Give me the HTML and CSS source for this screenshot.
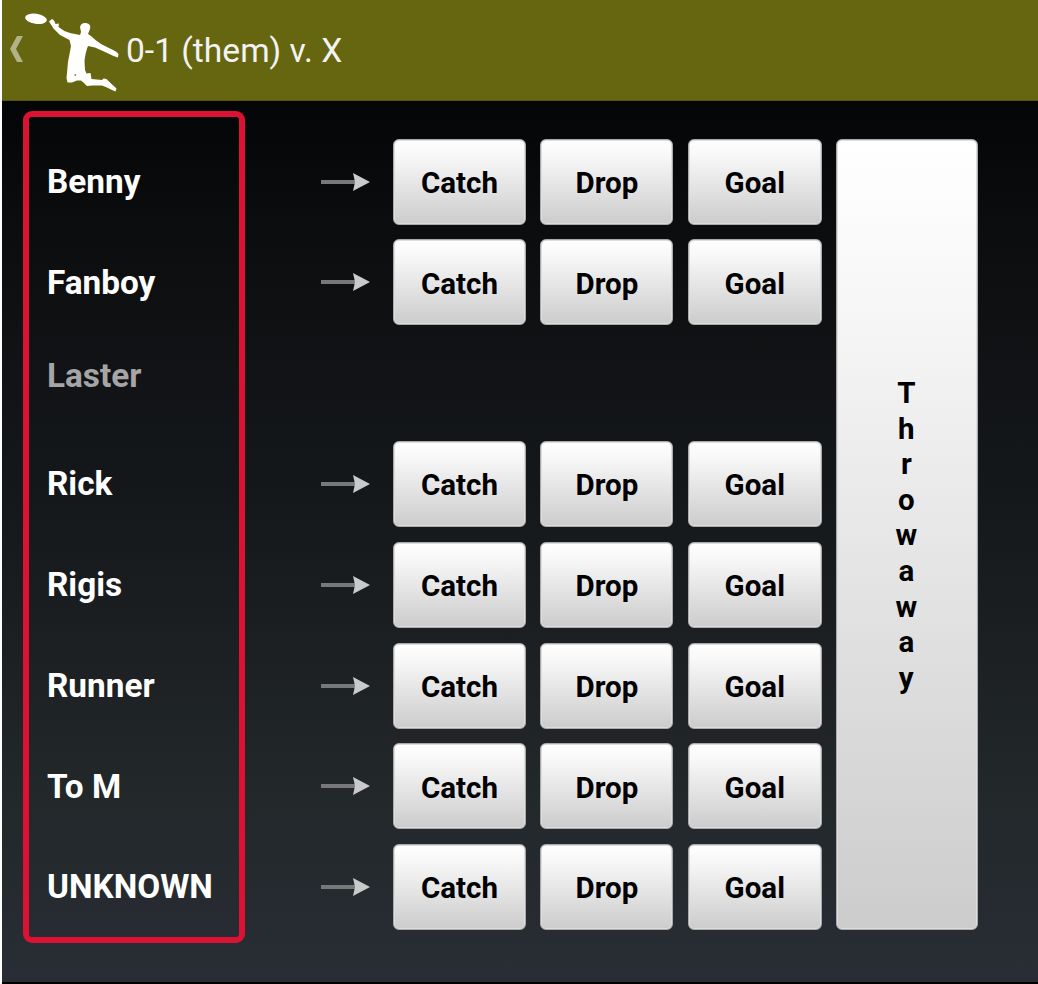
FILE: index.html
```html
<!DOCTYPE html>
<html lang="en">
<head>
<meta charset="utf-8">
<title>0-1 (them) v. X</title>
<link rel="stylesheet" href="styles.css">
</head>
<body>
<div class="app">
<header class="bar">
<svg class="logo" viewBox="0 0 120 101" aria-hidden="true">
<path class="back" d="M17 36h6l-7 13 7 13h-6L10 49z"/>
<ellipse cx="36" cy="18.8" rx="11" ry="5" transform="rotate(8 36 18.8)"/>
<path d="M49 21.500L52 19Q54.500 20 55.500 24L59 23.500 58.500 27Q63 31 70 33L80 35 81 32 80 27Q81 22.500 86 23Q91.500 24 90 29L88 34 91 36Q95 40 101 44L116 51.500 118.500 54 118 57.500 113.500 56 104 51.500 95 47.500 88 46Q85.500 52 84.500 61L85 70 86.500 73.500 90.500 73 91.500 79 102 80 103.500 78.500 106.500 79 110.500 83 116.500 88.500 115.500 91.500 112 90 107 87.500 102 85.500 92 85.500 87 86 84 83 81 80.500 77 80.500 72 82.500 67.500 82.500 66.500 78 68 62 71 46 69.500 40 60 35 53.500 28.500z"/>
<circle class="hole" cx="75.300" cy="75" r="1"/>
</svg>
<h1 class="title">0-1 (them) v. X</h1>
</header>
<main class="panel">
<section class="players">
<div class="row"><span class="name">Benny</span><svg class="arrow" viewBox="0 0 50 20"><path class="shaft" d="M0 8h35v4H0z"/><path class="head" d="M32 1L49 10 32 19 34 10z"/></svg><button>Catch</button><button>Drop</button><button>Goal</button></div>
<div class="row"><span class="name">Fanboy</span><svg class="arrow" viewBox="0 0 50 20"><path class="shaft" d="M0 8h35v4H0z"/><path class="head" d="M32 1L49 10 32 19 34 10z"/></svg><button>Catch</button><button>Drop</button><button>Goal</button></div>
<div class="row inactive"><span class="name">Laster</span></div>
<div class="row"><span class="name">Rick</span><svg class="arrow" viewBox="0 0 50 20"><path class="shaft" d="M0 8h35v4H0z"/><path class="head" d="M32 1L49 10 32 19 34 10z"/></svg><button>Catch</button><button>Drop</button><button>Goal</button></div>
<div class="row"><span class="name">Rigis</span><svg class="arrow" viewBox="0 0 50 20"><path class="shaft" d="M0 8h35v4H0z"/><path class="head" d="M32 1L49 10 32 19 34 10z"/></svg><button>Catch</button><button>Drop</button><button>Goal</button></div>
<div class="row"><span class="name">Runner</span><svg class="arrow" viewBox="0 0 50 20"><path class="shaft" d="M0 8h35v4H0z"/><path class="head" d="M32 1L49 10 32 19 34 10z"/></svg><button>Catch</button><button>Drop</button><button>Goal</button></div>
<div class="row"><span class="name">To M</span><svg class="arrow" viewBox="0 0 50 20"><path class="shaft" d="M0 8h35v4H0z"/><path class="head" d="M32 1L49 10 32 19 34 10z"/></svg><button>Catch</button><button>Drop</button><button>Goal</button></div>
<div class="row"><span class="name">UNKNOWN</span><svg class="arrow" viewBox="0 0 50 20"><path class="shaft" d="M0 8h35v4H0z"/><path class="head" d="M32 1L49 10 32 19 34 10z"/></svg><button>Catch</button><button>Drop</button><button>Goal</button></div>
</section>
<button class="throwaway">T<br>h<br>r<br>o<br>w<br>a<br>w<br>a<br>y</button>
<div class="highlight"></div>
</main>
</div>
</body>
</html>
```
FILE: styles.css
```css
* { box-sizing: border-box; }
body { margin: 0; background: #fff; font-family: Roboto, "Liberation Sans", sans-serif; }
.app { height: 984px; margin-left: 2px; display: flex; flex-direction: column; overflow: hidden; }
.bar { height: 101px; flex: none; display: flex; align-items: center; background: #666610; border-bottom: 1px solid #55550c; }
.logo { width: 120px; height: 101px; flex: none; margin-left: -2px; fill: #fff; }
.logo .back { fill: #b2b287; }
.logo .hole { fill: #8c8c50; }
.title { margin: 0; padding: 2px 0 0 6px; font-size: 33.600px; line-height: 40px; font-weight: 400; color: #f3f3f3; white-space: pre; }
.panel { position: relative; flex: 1; display: flex; align-items: flex-start; gap: 14px; padding: 37.600px 0 0 45px; background: linear-gradient(#040506, #0c0d0f 15%, #15181b 45%, #23282b 80%, #292d35); border-bottom: 2px solid #000; }
.players { display: grid; grid-auto-rows: 86px; row-gap: 14.800px; }
.row { display: flex; align-items: center; }
.name { width: 274px; padding-top: .600px; color: #fff; font-size: 33.350px; line-height: 40px; font-weight: 700; }
.inactive .name { color: #a5a5a5; padding-bottom: 14px; }
.arrow { width: 50px; height: 20px; margin-right: 22px; }
.shaft { fill: #777879; }
.head { fill: #c9cacb; }
button { margin: 0; padding: 4px 0 0; border: 1px solid #aaa; border-radius: 6px; background: linear-gradient(#fff, #f7f7f7 20%, #ccc); box-shadow: inset 0 0 0 1px #ddd; color: #000; font: 700 29.500px/35.600px Roboto, "Liberation Sans", sans-serif; }
.row button { width: 133px; height: 86px; }
.row button + button { margin-left: 14.400px; }
.row button:last-child { width: 134px; }
.throwaway { width: 142px; height: 791.400px; padding-right: 1px; }
.highlight { position: absolute; left: 21px; top: 10px; width: 222px; height: 832px; border: 6px solid #db1234; border-radius: 9px; pointer-events: none; }
```
